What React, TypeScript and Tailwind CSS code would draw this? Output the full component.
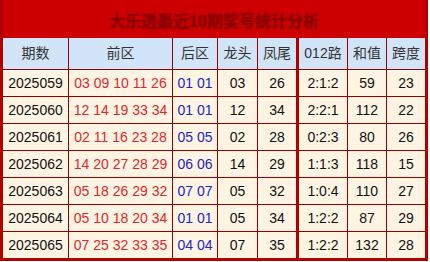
import React from 'react';

// 大乐透近期开奖统计
type Row = {
  qi: string;
  front: string;
  back: string;
  head: string;
  tail: string;
  road: string;
  sum: string;
  span: string;
};

const rows: Row[] = [
  { qi: '2025059', front: '03 09 10 11 26', back: '01 01', head: '03', tail: '26', road: '2:1:2', sum: '59', span: '23' },
  { qi: '2025060', front: '12 14 19 33 34', back: '01 01', head: '12', tail: '34', road: '2:2:1', sum: '112', span: '22' },
  { qi: '2025061', front: '02 11 16 23 28', back: '05 05', head: '02', tail: '28', road: '0:2:3', sum: '80', span: '26' },
  { qi: '2025062', front: '14 20 27 28 29', back: '06 06', head: '14', tail: '29', road: '1:1:3', sum: '118', span: '15' },
  { qi: '2025063', front: '05 18 26 29 32', back: '07 07', head: '05', tail: '32', road: '1:0:4', sum: '110', span: '27' },
  { qi: '2025064', front: '05 10 18 20 34', back: '01 01', head: '05', tail: '34', road: '1:2:2', sum: '87', span: '29' },
  { qi: '2025065', front: '07 25 32 33 35', back: '04 04', head: '07', tail: '35', road: '1:2:2', sum: '132', span: '28' },
];

const cell = 'flex items-center justify-center border-r border-[#9a0000]';

export default function App() {
  return (
    <div className="bg-white w-[430px] h-[262px] font-['Liberation_Sans','Noto_Sans_CJK_SC',sans-serif]">
      <div className="w-[428px] border-x-[3px] border-b-[3px] border-[#b00000]">
        {/* Title */}
        <div className="h-[38px] pt-[5px] bg-[#cc0000] flex items-center justify-center text-[16px] font-bold text-[#8c0000] [text-shadow:0_0_2px_#a00000]">
          大乐透最近10期奖号统计分析
        </div>

        {/* Header */}
        <div className="h-[31px] flex bg-[#d2e4f8] text-[14px] text-[#333]">
          <div className={`${cell} w-[66px]`}>期数</div>
          <div className={`${cell} w-[104px]`}>前区</div>
          <div className={`${cell} w-[45px]`}>后区</div>
          <div className={`${cell} w-[40px]`}>龙头</div>
          <div className={`${cell} w-[41px] border-r-[3px] border-r-[#b00000]`}>凤尾</div>
          <div className={`${cell} w-[49px]`}>012路</div>
          <div className={`${cell} w-[39px]`}>和值</div>
          <div className="flex items-center justify-center w-[38px]">跨度</div>
        </div>

        {/* Body */}
        {rows.map((r) => (
          <div key={r.qi} className="h-[27px] flex bg-[#fdf4e3] border-t border-[#9a0000] text-[14px] text-[#111]">
            <div className={`${cell} w-[66px]`}>{r.qi}</div>
            <div className={`${cell} w-[104px] text-[#e3262c]`}>{r.front}</div>
            <div className={`${cell} w-[45px] text-[#2323c8]`}>{r.back}</div>
            <div className={`${cell} w-[40px]`}>{r.head}</div>
            <div className={`${cell} w-[41px] border-r-[3px] border-r-[#b00000]`}>{r.tail}</div>
            <div className={`${cell} w-[49px]`}>{r.road}</div>
            <div className={`${cell} w-[39px]`}>{r.sum}</div>
            <div className="flex items-center justify-center w-[38px]">{r.span}</div>
          </div>
        ))}
      </div>
    </div>
  );
}
